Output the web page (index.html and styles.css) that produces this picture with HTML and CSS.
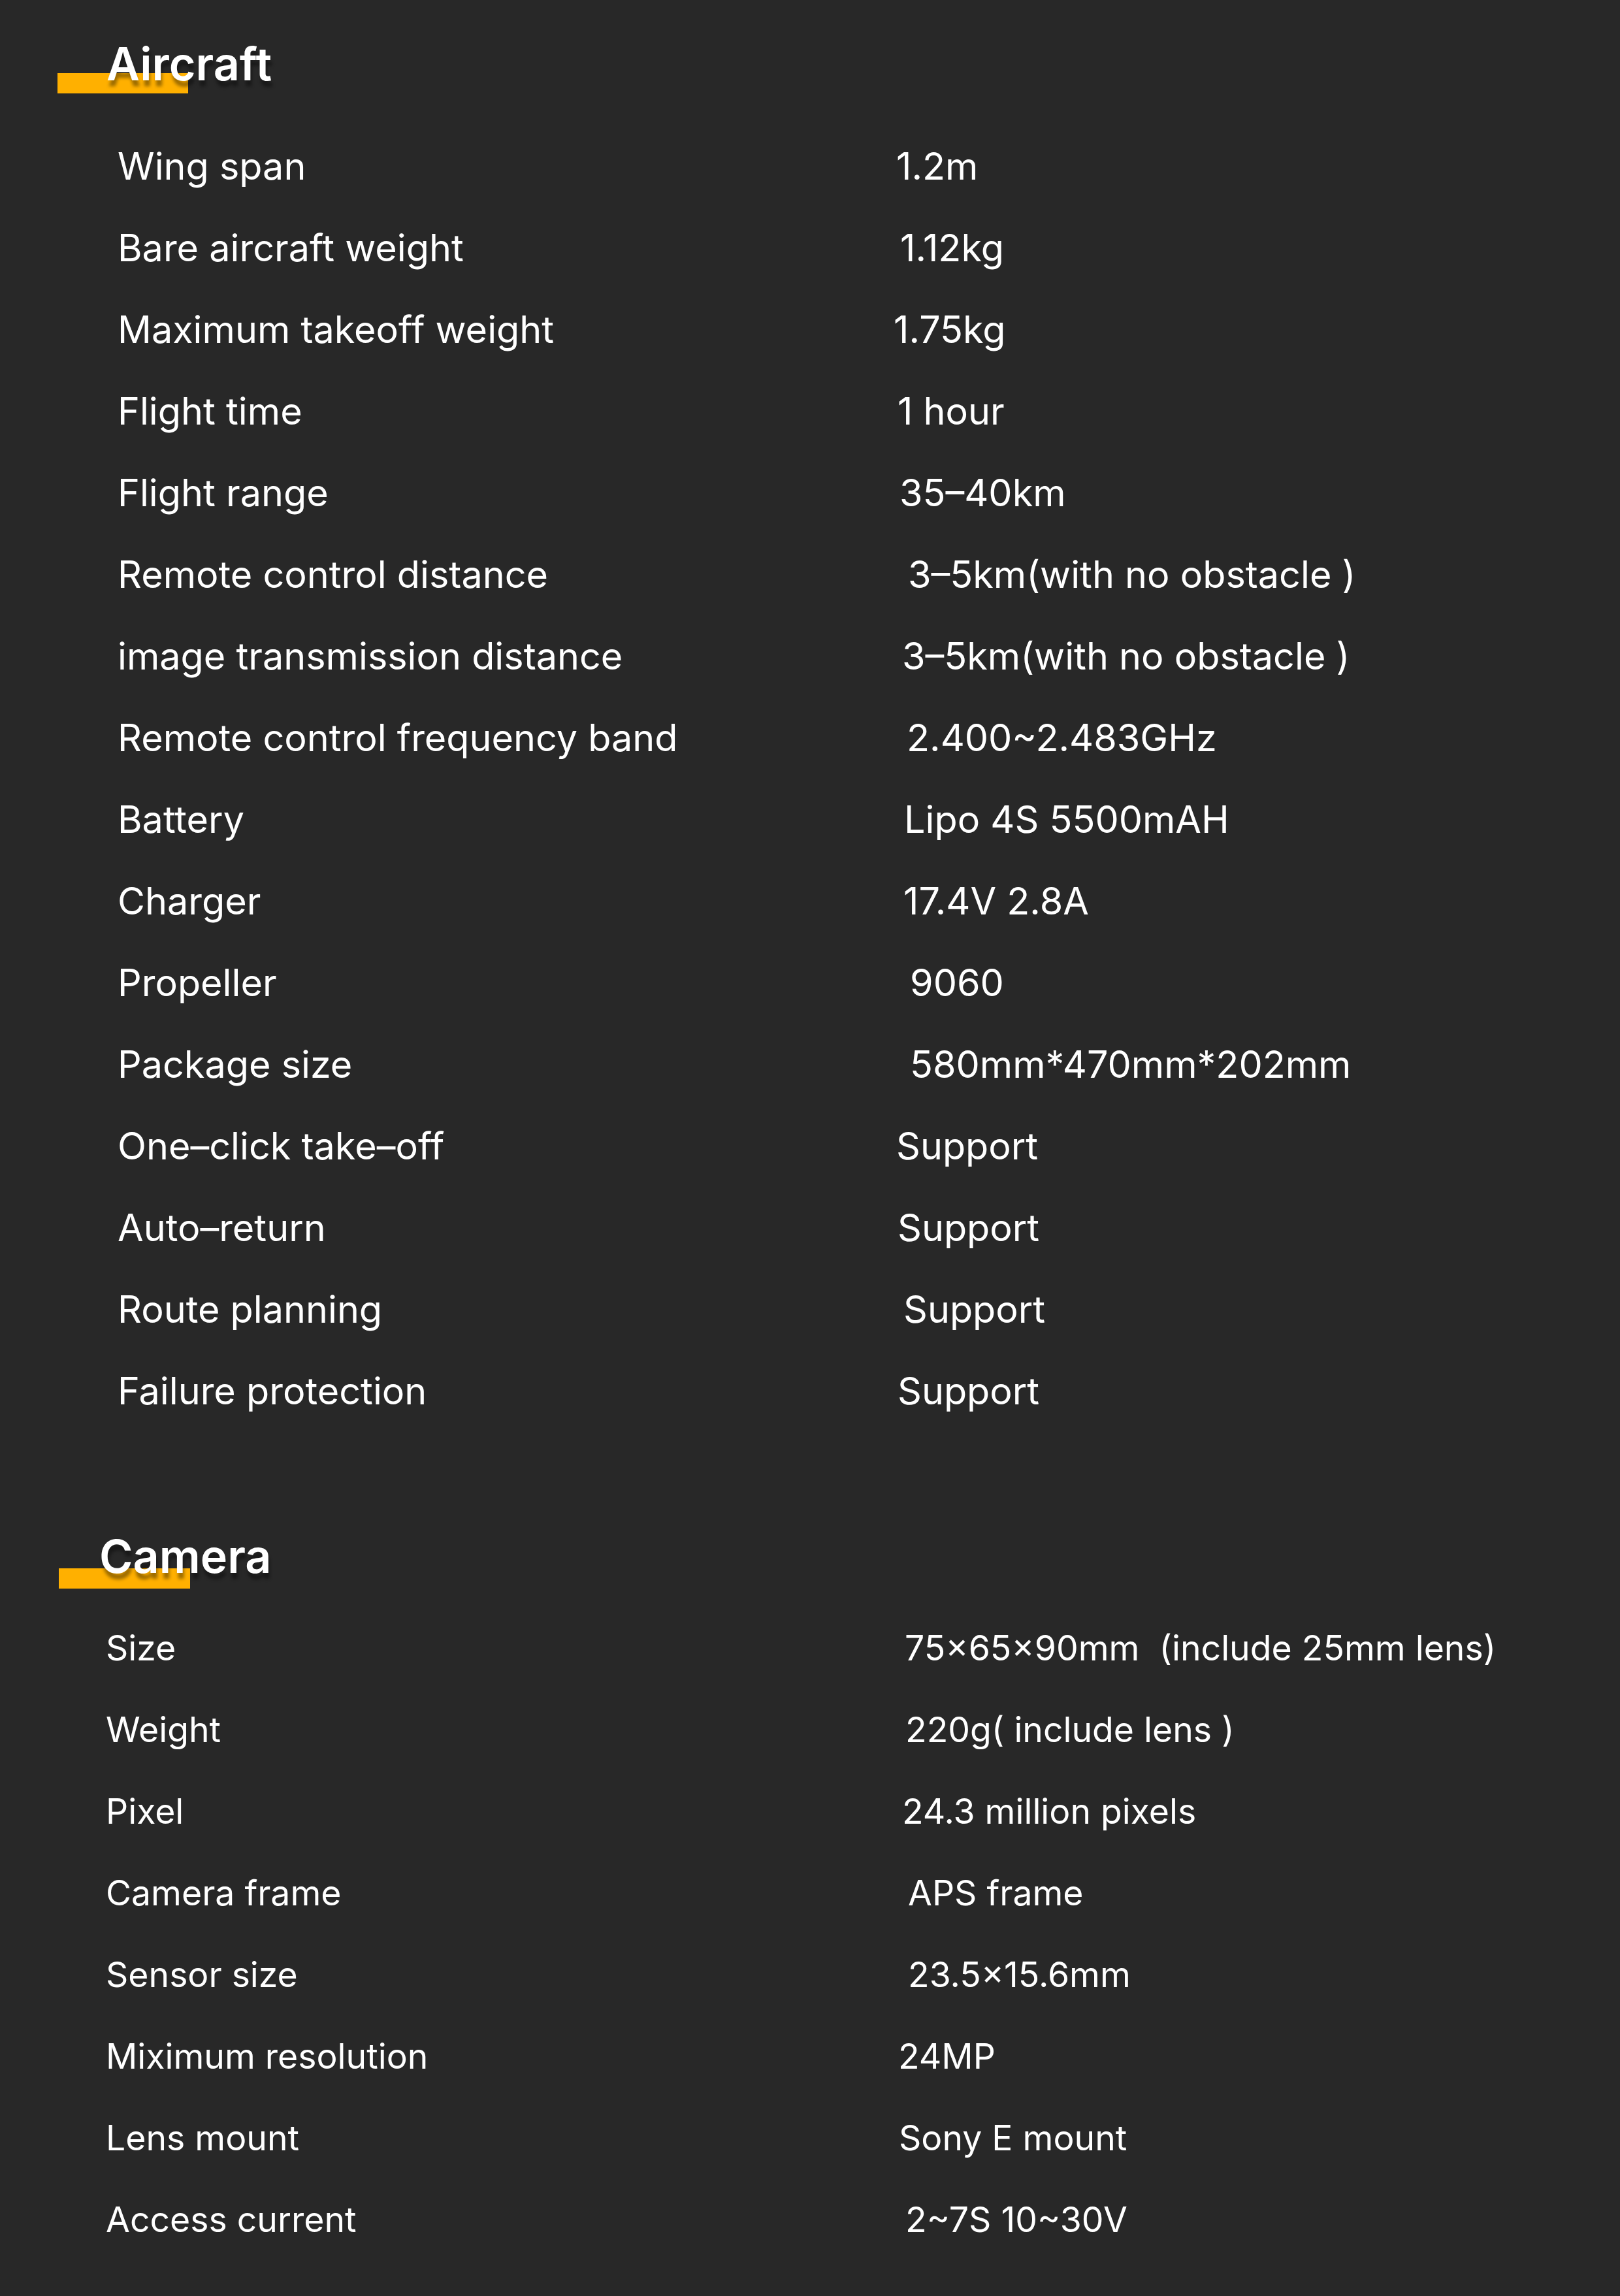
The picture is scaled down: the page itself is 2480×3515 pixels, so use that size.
FILE: index.html
```html
<!DOCTYPE html>
<html lang="en">
<head>
<meta charset="utf-8">
<title>Specifications</title>
<link rel="stylesheet" href="styles.css">
</head>
<body>
<main class="page">
  <section class="spec spec-aircraft">
    <h2 class="spec-title"><span class="bar"></span><span class="title-text">Aircraft</span></h2>
    <div class="rows">
      <div class="row"><span class="label">Wing span</span><span class="value">1.2m</span></div>
      <div class="row"><span class="label">Bare aircraft weight</span><span class="value dx6">1.12kg</span></div>
      <div class="row"><span class="label">Maximum takeoff weight</span><span class="value dxm4">1.75kg</span></div>
      <div class="row"><span class="label">Flight time</span><span class="value dx2">1 hour</span></div>
      <div class="row"><span class="label">Flight range</span><span class="value dx5">35–40km</span></div>
      <div class="row"><span class="label">Remote control distance</span><span class="value dx18">3–5km(with no obstacle )</span></div>
      <div class="row"><span class="label">image transmission distance</span><span class="value dx9">3–5km(with no obstacle )</span></div>
      <div class="row"><span class="label">Remote control frequency band</span><span class="value dx16">2.400~2.483GHz</span></div>
      <div class="row"><span class="label">Battery</span><span class="value dx12">Lipo 4S 5500mAH</span></div>
      <div class="row"><span class="label">Charger</span><span class="value dx11">17.4V 2.8A</span></div>
      <div class="row"><span class="label">Propeller</span><span class="value dx21">9060</span></div>
      <div class="row"><span class="label">Package size</span><span class="value dx21">580mm*470mm*202mm</span></div>
      <div class="row"><span class="label">One–click take–off</span><span class="value">Support</span></div>
      <div class="row"><span class="label">Auto–return</span><span class="value dx2">Support</span></div>
      <div class="row"><span class="label">Route planning</span><span class="value dx11">Support</span></div>
      <div class="row"><span class="label">Failure protection</span><span class="value dx2">Support</span></div>
    </div>
  </section>

  <section class="spec spec-camera">
    <h2 class="spec-title"><span class="bar"></span><span class="title-text">Camera</span></h2>
    <div class="rows">
      <div class="row"><span class="label">Size</span><span class="value dx13">75×65×90mm&nbsp;&nbsp;(include 25mm lens)</span></div>
      <div class="row"><span class="label">Weight</span><span class="value dx14">220g( include lens )</span></div>
      <div class="row"><span class="label">Pixel</span><span class="value dx9">24.3 million pixels</span></div>
      <div class="row"><span class="label">Camera frame</span><span class="value dx18">APS frame</span></div>
      <div class="row"><span class="label">Sensor size</span><span class="value dx18">23.5×15.6mm</span></div>
      <div class="row"><span class="label">Miximum resolution</span><span class="value dx3">24MP</span></div>
      <div class="row"><span class="label">Lens mount</span><span class="value dx4">Sony E mount</span></div>
      <div class="row"><span class="label">Access current</span><span class="value dx14">2~7S 10~30V</span></div>
    </div>
  </section>
</main>
</body>
</html>
```

FILE: styles.css
```css
html {
  background: #282828;
}

body {
  margin: 0;
  color: #ffffff;
  font-family: Inter, "Liberation Sans", Arial, sans-serif;
}

.page {
  width: 2480px;
  min-height: 3515px;
  box-sizing: border-box;
  padding-top: 62px;
  padding-bottom: 54px;
}

.spec-title {
  position: relative;
  margin: 0;
  font-size: 70px;
  line-height: 71px;
  font-weight: 600;
  color: #ffffff;
}

.spec-title .bar {
  position: absolute;
  width: 200px;
  height: 31px;
  background: #ffb000;
}

.title-text {
  position: relative;
  text-shadow: 2px 9px 5px rgba(0, 0, 0, 0.4);
}

.spec-aircraft .spec-title {
  padding-left: 163px;
}

.spec-aircraft .spec-title .bar {
  left: 88px;
  top: 50px;
}

.spec-camera {
  margin-top: 155px;
}

.spec-camera .spec-title {
  padding-left: 152px;
}

.spec-camera .spec-title .bar {
  left: 90px;
  top: 54px;
  width: 201px;
}

.rows {
  display: flex;
  flex-direction: column;
}

.spec-aircraft .rows {
  margin-top: 59px;
  padding-left: 180px;
  font-size: 57.5px;
}

.spec-camera .rows {
  margin-top: 42px;
  padding-left: 162px;
  font-size: 53.5px;
}

.row {
  display: grid;
  height: 125px;
  line-height: 125px;
  white-space: nowrap;
}

.spec-aircraft .row {
  grid-template-columns: 1192px 1fr;
}

.spec-camera .row {
  grid-template-columns: 1210px 1fr;
}

.value.dxm4 { margin-left: -4px; }
.value.dx2 { margin-left: 2px; }
.value.dx3 { margin-left: 3px; }
.value.dx4 { margin-left: 4px; }
.value.dx5 { margin-left: 5px; }
.value.dx6 { margin-left: 6px; }
.value.dx9 { margin-left: 9px; }
.value.dx11 { margin-left: 11px; }
.value.dx12 { margin-left: 12px; }
.value.dx13 { margin-left: 13px; }
.value.dx14 { margin-left: 14px; }
.value.dx16 { margin-left: 16px; }
.value.dx18 { margin-left: 18px; }
.value.dx21 { margin-left: 21px; }
```
